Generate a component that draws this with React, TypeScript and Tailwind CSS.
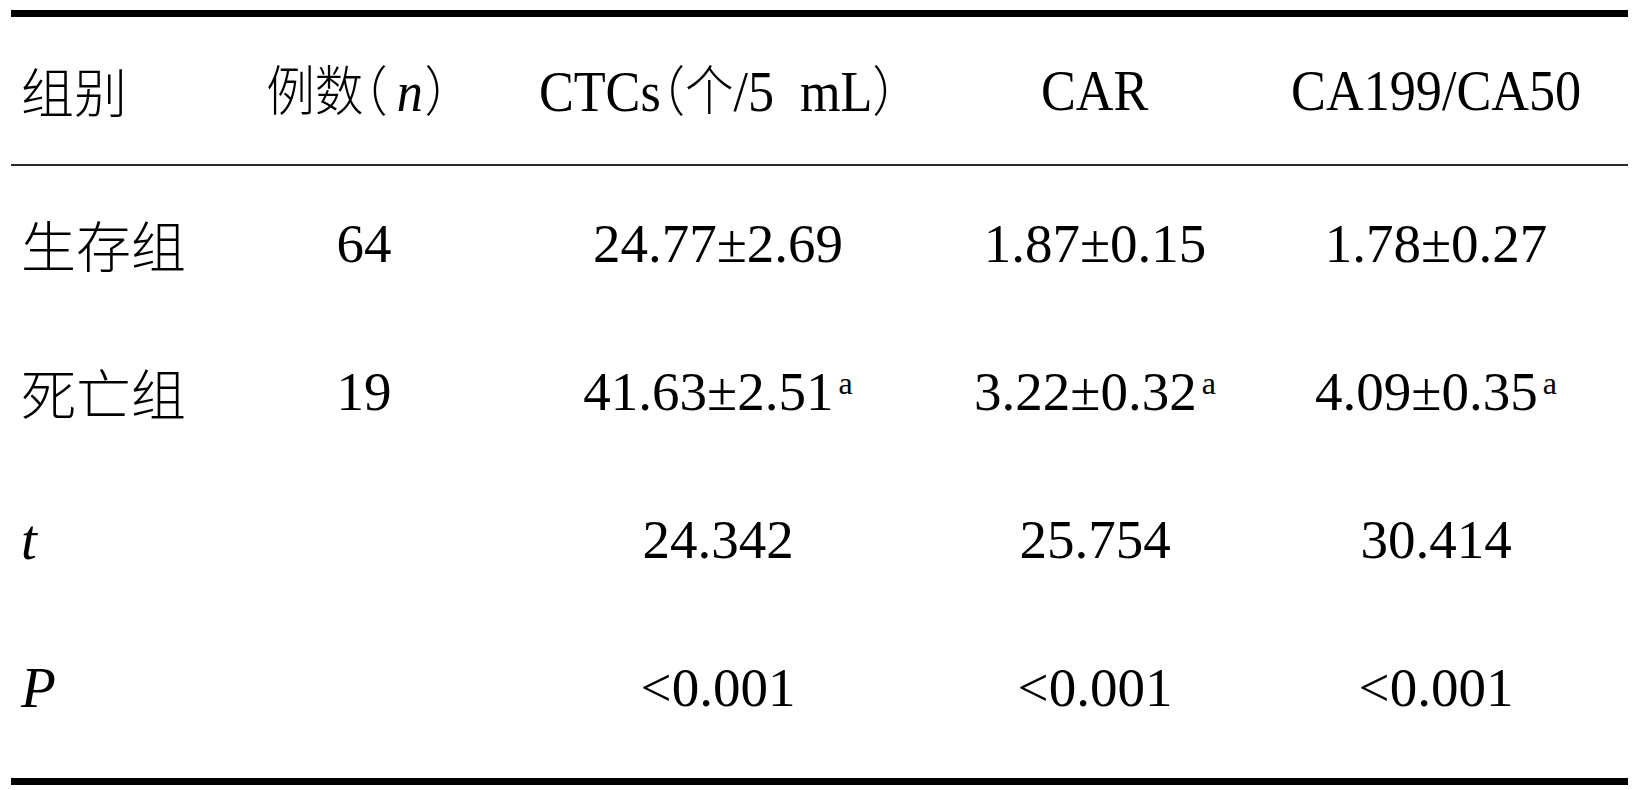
import React from "react";

/**
 * 两组 CTCs / CAR / CA199/CA50 比较表
 * - 三线表：上下粗线 + 表头细线
 * - 西文 Liberation Serif，中文 Noto Sans CJK SC
 */

const LATIN = "font-['Liberation_Serif','Times_New_Roman','Noto_Sans_CJK_SC',serif]";
const CJK = "font-['Noto_Sans_CJK_SC','Noto_Sans_CJK_JP',sans-serif]";
const COLS = "grid grid-cols-[227px_252px_456px_298px_384px]";

type Row = {
  label: string;
  italic?: boolean;
  n?: string;
  ctc: string;
  car: string;
  ca: string;
  sup?: boolean;
};

const ROWS: Row[] = [
  { label: "生存组", n: "64", ctc: "24.77±2.69", car: "1.87±0.15", ca: "1.78±0.27" },
  { label: "死亡组", n: "19", ctc: "41.63±2.51", car: "3.22±0.32", ca: "4.09±0.35", sup: true },
  { label: "t", italic: true, ctc: "24.342", car: "25.754", ca: "30.414" },
  { label: "P", italic: true, ctc: "<0.001", car: "<0.001", ca: "<0.001" },
];

// 正文数值
function Num({ value, sup }: { value?: string; sup?: boolean }) {
  if (!value) return null;
  return (
    <span className={`inline-block text-[55px] leading-none whitespace-nowrap ${LATIN}`}>
      {value}
      {sup && <sup className="ml-[5px] text-[32px]">a</sup>}
    </span>
  );
}

// 表头：略压扁
function Head({ children, className = "" }: { children: React.ReactNode; className?: string }) {
  return (
    <div className={`flex justify-center ${className}`}>
      <span className="inline-block scale-x-[0.9] leading-none whitespace-nowrap">{children}</span>
    </div>
  );
}

const L = ({ children, italic, className = "" }: { children: React.ReactNode; italic?: boolean; className?: string }) => (
  <span className={`text-[58px] ${LATIN} ${italic ? "italic" : ""} ${className}`}>{children}</span>
);
const C = ({ children }: { children: React.ReactNode }) => (
  <span className={`text-[54px] font-light ${CJK} [font-feature-settings:'halt']`}>{children}</span>
);

export default function App() {
  return (
    <div className="min-h-[790px] w-full bg-white pt-[10px] text-black">
      <div className="ml-[11px] w-[1617px] border-y-[7px] border-black">
        {/* Header */}
        <div className={`${COLS} h-[149px] items-center border-b-2 border-[#2a2a2a]`}>
          <div className={`pl-[10px] text-[53px] leading-none font-light ${CJK}`}>组别</div>
          <Head className="pr-[14px]">
            <C>例数（</C>
            <L italic className="ml-[10px] mr-[2px]">n</L>
            <C>）</C>
          </Head>
          <Head>
            <L>CTCs</L>
            <C>（个</C>
            <L>/5 </L>
            <L className="ml-[14px]">mL</L>
            <C>）</C>
          </Head>
          <Head>
            <L>CAR</L>
          </Head>
          <Head>
            <L>CA199/CA50</L>
          </Head>
        </div>

        {/* Body */}
        <div className="pt-[3px] pb-[17px]">
          {ROWS.map((r) => (
            <div key={r.label} className={`${COLS} h-[148px] items-center`}>
              <div className="pl-[10px] leading-none">
                {r.italic ? (
                  <span className={`text-[57px] italic ${LATIN}`}>{r.label}</span>
                ) : (
                  <span className={`text-[55px] font-light ${CJK}`}>{r.label}</span>
                )}
              </div>
              <div className="text-center">
                <Num value={r.n} />
              </div>
              <div className="text-center">
                <Num value={r.ctc} sup={r.sup} />
              </div>
              <div className="text-center">
                <Num value={r.car} sup={r.sup} />
              </div>
              <div className="text-center">
                <Num value={r.ca} sup={r.sup} />
              </div>
            </div>
          ))}
        </div>
      </div>
    </div>
  );
}
